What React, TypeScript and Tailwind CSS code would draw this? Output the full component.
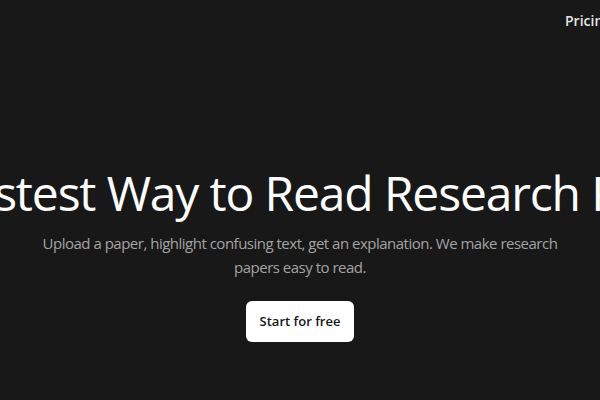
export default function App() {
  return (
    <div
      className="w-[600px] h-[400px] overflow-hidden bg-[#181818] text-white flex flex-col"
      style={{ fontFamily: '"Open Sans", "Noto Sans", sans-serif' }}
    >
      <header className="h-[44px] pt-[11px] pl-[565px] whitespace-nowrap">
        <nav className="flex gap-6 text-[14px] leading-5 font-semibold text-[#e5e5e5]">
          <a>Pricing</a>
        </nav>
      </header>
      <main className="flex flex-col items-center pt-[121px]">
        <div className="w-full flex justify-start">
          <h1 className="ml-[-55px] whitespace-nowrap text-[48px] leading-[56px] font-normal tracking-[-1.15px]">
            Fastest Way to Read Research Papers
          </h1>
        </div>
        <p className="mt-[10px] max-w-[530px] text-center text-[15px] leading-6 tracking-[-0.5px] text-[#a3a3a3]">
          Upload a paper, highlight confusing text, get an explanation. We make research papers easy to read.
        </p>
        <button className="mt-[22px] h-[41px] w-[108px] flex items-center justify-center rounded-md bg-white text-[#171717] text-[13px] font-semibold">
          Start for free
        </button>
      </main>
    </div>
  );
}
